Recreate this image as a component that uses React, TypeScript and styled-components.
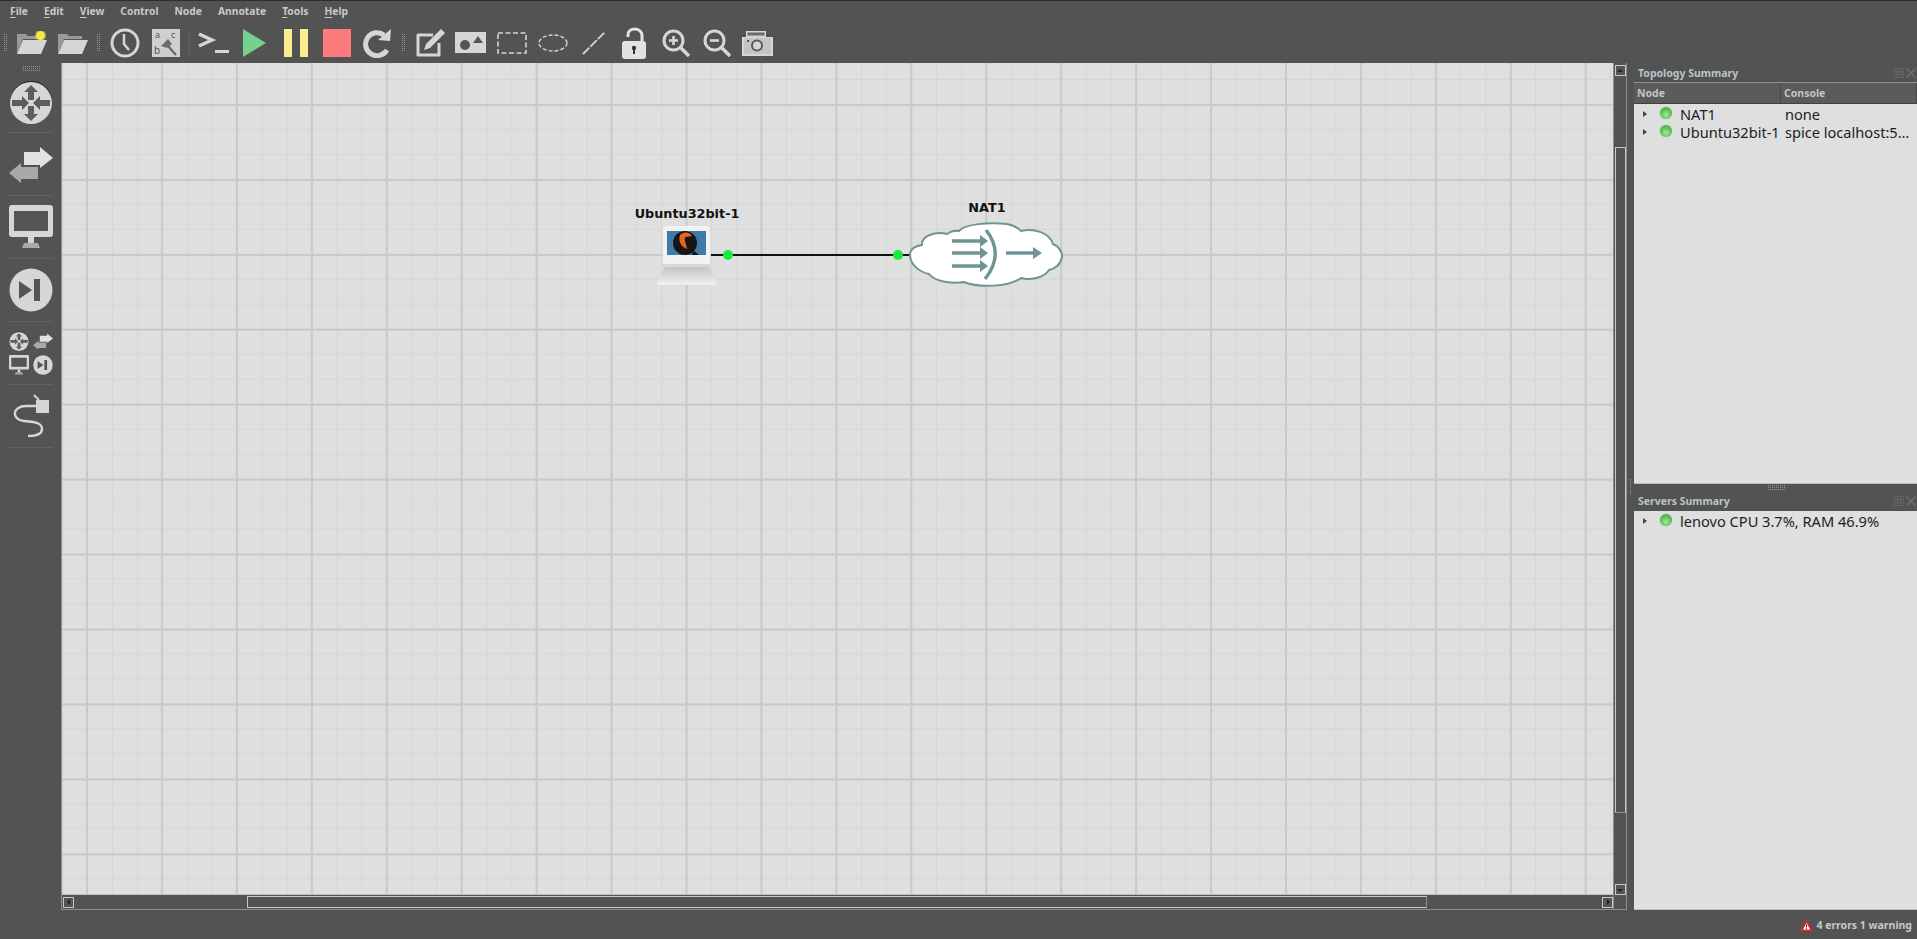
import * as React from "react";
import styled, {createGlobalStyle} from "styled-components";

const GlobalStyle = createGlobalStyle`
    html, body {
        margin: 0;
        padding: 0;
        height: 100%;
        overflow: hidden;
        background: #535353;
    }
    #root {
        height: 100%;
    }
`;

const Page = styled.div`
    width: 1917px;
    height: 939px;
    display: flex;
    flex-direction: column;
    background: #535353;
    font-family: "Noto Sans", "Open Sans", sans-serif;
    border-top: 1px solid #2e2e2e;
    box-sizing: border-box;
`;

const MenuBar = styled.div`
    height: 21px;
    display: flex;
    align-items: center;
    padding: 0 0 2px 10px;
    gap: 16px;
    box-sizing: border-box;
`;

const MenuItem = styled.span`
    font-size: 10.3px;
    font-weight: 700;
    color: #c6cacb;
    u {
        text-underline-offset: 2px;
    }
`;

const Toolbar = styled.div`
    height: 41px;
    display: flex;
    align-items: center;
`;

const Grip = styled.div`
    width: 5px;
    height: 18px;
    margin: 0 3px;
    flex: none;
    background: conic-gradient(#929292 25%, transparent 25%) 0 0 / 2px 2px;
`;

const ToolSep = styled.div`
    width: 1px;
    height: 28px;
    background: #5f5f5f;
    margin: 0 3px;
`;

const ToolButton = styled.div`
    width: 41px;
    height: 41px;
    display: flex;
    align-items: center;
    justify-content: center;
    flex: none;
`;

const Main = styled.div`
    height: 847px;
    display: flex;
`;

const LeftDock = styled.div`
    width: 61px;
    flex: none;
    display: flex;
    flex-direction: column;
    align-items: center;
`;

const HorizontalGrip = styled.div<{$top?: number}>`
    width: 18px;
    height: 5px;
    margin-top: ${p => p.$top ?? 0}px;
    flex: none;
    background: conic-gradient(#929292 25%, transparent 25%) 0 0 / 2px 2px;
`;

const DockButton = styled.div<{$h: number}>`
    width: 44px;
    height: ${p => p.$h}px;
    display: flex;
    align-items: center;
    justify-content: center;
    border-bottom: 1px solid #626262;
    box-sizing: border-box;
    flex: none;
`;

const MultiIcon = styled.div`
    display: grid;
    grid-template-columns: 20px 20px;
    gap: 4px;
    align-items: center;
    line-height: 0;
`;

const CanvasFrame = styled.div`
    width: 1566px;
    flex: none;
    display: grid;
    grid-template-columns: 1fr 13px;
    grid-template-rows: 1fr 14px;
    border: 1px solid #8f8f8f;
    border-top: 0;
    box-sizing: border-box;
`;

const Canvas = styled.div`
    position: relative;
    overflow: hidden;
    background-color: #dfdfdf;
    background-image:
        linear-gradient(to right, #c9c9c9 2px, transparent 2px),
        linear-gradient(to bottom, #c9c9c9 2px, transparent 2px),
        linear-gradient(to right, #d6d6d6 1px, transparent 1px),
        linear-gradient(to bottom, #d6d6d6 1px, transparent 1px);
    background-size: 74.95px 74.95px, 74.95px 74.95px, 24.98px 24.98px, 24.98px 24.98px;
    background-position: 24px 41px, 24px 41px, 0px 16px, 0px 16px;
    border-bottom: 1px solid #c0c0c0;
`;

const NodeLabel = styled.div<{$x: number; $y: number}>`
    position: absolute;
    left: ${p => p.$x}px;
    top: ${p => p.$y}px;
    transform: translate(-50%, -50%);
    font-family: "DejaVu Sans", sans-serif;
    font-size: 12.8px;
    font-weight: 700;
    color: #111;
    white-space: nowrap;
`;

const NodeArt = styled.div<{$x: number; $y: number}>`
    position: absolute;
    left: ${p => p.$x}px;
    top: ${p => p.$y}px;
    line-height: 0;
`;

const VScroll = styled.div`
    display: flex;
    flex-direction: column;
    align-items: center;
    background: #535353;
    border-left: 1px solid #8f8f8f;
    padding-top: 2px;
`;

const HScroll = styled.div`
    display: flex;
    align-items: center;
    background: #535353;
    padding-left: 1px;
`;

const ScrollButton = styled.div`
    width: 11px;
    height: 11px;
    flex: none;
    border: 1px solid #c8c8c8;
    background: #555;
    display: flex;
    align-items: center;
    justify-content: center;
    color: #222;
    box-sizing: border-box;
`;

const VThumb = styled.div`
    width: 11px;
    flex: none;
    height: 666px;
    margin-top: 71px;
    margin-bottom: auto;
    border: 1px solid #c8c8c8;
    border-bottom-color: #8f8f8f;
    box-sizing: border-box;
`;

const HThumb = styled.div`
    height: 12px;
    flex: none;
    width: 1180px;
    margin-left: 173px;
    margin-right: auto;
    border: 1px solid #c8c8c8;
    border-right-color: #8f8f8f;
    box-sizing: border-box;
`;

const Corner = styled.div`
    background: #535353;
    border-left: 1px solid #8f8f8f;
`;

const DockGap = styled.div`
    width: 7px;
    flex: none;
    display: flex;
    align-items: center;
    justify-content: center;
`;

const SideGrip = styled.div`
    width: 3px;
    height: 16px;
    background: conic-gradient(#929292 25%, transparent 25%) 0 0 / 2px 2px;
`;

const RightDock = styled.div`
    width: 283px;
    flex: none;
    display: flex;
    flex-direction: column;
`;

const DockTitle = styled.div<{$h: number}>`
    height: ${p => p.$h}px;
    display: flex;
    align-items: center;
    justify-content: space-between;
    padding: 0 1px 0 4px;
    font-size: 10.5px;
    font-weight: 700;
    color: #b9c5c9;
    flex: none;
`;

const TitleIcons = styled.div`
    display: flex;
    gap: 2px;
    color: #6e6e6e;
    line-height: 0;
`;

const TableHead = styled.div`
    height: 22px;
    display: flex;
    flex: none;
    background: #5b5b5b;
    border-top: 1px solid #8f8f8f;
    border-bottom: 1px solid #414141;
    box-sizing: border-box;
`;

const HeadCell = styled.div<{$w: number}>`
    width: ${p => p.$w}px;
    flex: none;
    display: flex;
    align-items: center;
    padding-left: 3px;
    box-sizing: border-box;
    font-size: 10.5px;
    font-weight: 700;
    color: #bfc6c8;
    border-right: 1px solid #484848;
`;

const PanelBody = styled.div<{$grow?: boolean}>`
    background: #dfdfdf;
    flex: ${p => (p.$grow ? 1 : "none")};
    height: 380px;
    padding-top: 1px;
    box-sizing: border-box;
    border-bottom: 1px solid #bdbdbd;
`;

const Row = styled.div`
    height: 18px;
    display: flex;
    align-items: center;
    font-size: 14.6px;
    color: #1d1d1d;
    white-space: nowrap;
`;

const Arrow = styled.span`
    width: 0;
    height: 0;
    margin-left: 9px;
    border-left: 4px solid #444;
    border-top: 3.5px solid transparent;
    border-bottom: 3.5px solid transparent;
    flex: none;
`;

const Led = styled.span`
    width: 12px;
    height: 12px;
    border-radius: 50%;
    margin-left: 13px;
    margin-right: 8px;
    flex: none;
    margin-top: -2px;
    background: radial-gradient(circle at 50% 65%, #a4ec9a 0%, #59c04f 55%, #4d9a47 100%);
    box-shadow: 0 0 1px #7a9a78;
`;

const NodeName = styled.span`
    width: 105px;
    flex: none;
`;

const Splitter = styled.div`
    height: 7px;
    display: flex;
    justify-content: center;
    align-items: center;
    flex: none;
`;

const StatusBar = styled.div`
    flex: 1;
    display: flex;
    align-items: center;
    justify-content: flex-end;
    gap: 3px;
    padding-right: 5px;
    font-size: 10.5px;
    font-weight: 700;
    color: #c6cacb;
`;

const L = "#d6d6d6";

const Folder = ({dot}: {dot?: boolean}) => (
    <svg width="32" height="24" viewBox="0 0 32 24">
        <path d="M1 23V3h9l2 2h13v3H7L1 23z" fill="#999" />
        <path d="M7 9h24l-6 14H1z" fill={L} />
        {dot && <circle cx="24.5" cy="4.5" r="6" fill="#f6e84a" opacity="0.3" />}
        {dot && <circle cx="24.5" cy="4.5" r="4.5" fill="#f6e84a" />}
    </svg>
);

const Clock = () => (
    <svg width="30" height="30" viewBox="0 0 30 30">
        <circle cx="15" cy="15" r="13" fill="none" stroke={L} strokeWidth="3" />
        <path d="M14 6v10l5 6" fill="none" stroke={L} strokeWidth="2.5" />
    </svg>
);

const AbcStyle = () => (
    <svg width="28" height="28" viewBox="0 0 28 28">
        <rect width="28" height="28" fill="#cfcfcf" />
        <text x="3" y="9" fontSize="9" fill="#555" fontFamily="Noto Sans">a</text>
        <text x="19" y="9" fontSize="9" fill="#555" fontFamily="Noto Sans">c</text>
        <text x="2" y="25" fontSize="10" fill="#555" fontFamily="Noto Sans">b</text>
        <path d="M9 17l7-7 4 5-5 4z" fill="#6d6d6d" />
        <path d="M16 17l8 9" stroke="#6d6d6d" strokeWidth="2.5" />
    </svg>
);

const Terminal = () => (
    <svg width="32" height="22" viewBox="0 0 32 22">
        <path d="M1 2l13 6-13 6" fill="none" stroke={L} strokeWidth="3.5" />
        <rect x="17" y="18" width="14" height="3" fill={L} />
    </svg>
);

const Play = () => (
    <svg width="23" height="28" viewBox="0 0 23 28">
        <path d="M0 0l23 14L0 28z" fill="#76d090" />
    </svg>
);

const Pause = () => (
    <svg width="24" height="28" viewBox="0 0 24 28">
        <rect width="8" height="28" fill="#f8ee8e" />
        <rect x="16" width="8" height="28" fill="#f8ee8e" />
    </svg>
);

const StopSquare = () => (
    <svg width="28" height="28" viewBox="0 0 28 28">
        <rect width="28" height="28" fill="#fb7a7e" />
    </svg>
);

const Reload = () => (
    <svg width="29" height="30" viewBox="0 0 29 30">
        <path d="M21 7a11.5 11.5 0 1 0 3 15" fill="none" stroke={L} strokeWidth="5" />
        <path d="M15 12L27 13l1-12z" fill={L} />
    </svg>
);

const Note = () => (
    <svg width="30" height="30" viewBox="0 0 30 30">
        <path d="M24 15v12H3V7h15" fill="none" stroke={L} strokeWidth="3" strokeLinejoin="round" />
        <path d="M26 1l4 4-15 15-6 2 2-6z" fill={L} />
    </svg>
);

const Picture = () => (
    <svg width="31" height="22" viewBox="0 0 31 22">
        <rect width="31" height="21" fill={L} />
        <circle cx="10" cy="13" r="5" fill="#555" />
        <path d="M18 11l5-7 5 7z" fill="#555" />
    </svg>
);

const DashRect = () => (
    <svg width="30" height="22" viewBox="0 0 30 22">
        <rect x="1" y="1" width="28" height="20" fill="none" stroke={L} strokeWidth="1.6" strokeDasharray="5 2.5" />
    </svg>
);

const DashEllipse = () => (
    <svg width="30" height="20" viewBox="0 0 30 20">
        <ellipse cx="15" cy="10" rx="14" ry="8" fill="none" stroke={L} strokeWidth="1.4" strokeDasharray="4 2" />
    </svg>
);

const DashLine = () => (
    <svg width="24" height="24" viewBox="0 0 24 24">
        <path d="M1 23L23 1" stroke={L} strokeWidth="1.8" strokeDasharray="9 1.5" />
    </svg>
);

const Lock = () => (
    <svg width="25" height="32" viewBox="0 0 25 32">
        <path d="M5 10V8c0-8 13-8 14 0v6" transform="translate(1 0)" fill="none" stroke="#e2e2e2" strokeWidth="3" />
        <rect x="0" y="14" width="24" height="18" rx="3" fill="#e2e2e2" />
        <circle cx="12" cy="21" r="2.2" fill="#333" />
        <rect x="11" y="22" width="2" height="5" fill="#333" />
    </svg>
);

const Zoom = ({plus}: {plus?: boolean}) => (
    <svg width="28" height="28" viewBox="0 0 28 28">
        <circle cx="11.5" cy="11.5" r="9.5" fill="none" stroke={L} strokeWidth="3" />
        <path d="M19 19l8 8" stroke={L} strokeWidth="3.5" />
        <path d="M7 11.5h9" stroke={L} strokeWidth="2.6" />
        {plus && <path d="M11.5 7v9" stroke={L} strokeWidth="2.6" />}
    </svg>
);

const Camera = () => (
    <svg width="31" height="26" viewBox="0 0 31 26">
        <path d="M0 7h4V1h20v6h7v19H0z" fill={L} />
        <rect x="5.5" y="2.5" width="17" height="3" fill="#6a6a6a" />
        <rect x="2" y="8" width="27" height="16" fill="#c4c4c4" />
        <circle cx="15" cy="15.5" r="6" fill="#5a5a5a" />
        <circle cx="15" cy="15.5" r="4" fill={L} />
        <rect x="5" y="10" width="2" height="2" fill="#555" />
    </svg>
);

const Router = ({size}: {size: number}) => (
    <svg width={size} height={size} viewBox="0 0 44 44">
        <path d="M2 22a20 20 0 0 1 40 0" fill="none" stroke="#1f1f1f" strokeWidth="2" />
        <circle cx="22" cy="23" r="21" fill={L} />
        <g fill="#5d5d5d">
            <path d="M22 5l7 7h-4v8h-6v-8h-4z" />
            <path d="M22 41l7-7h-4v-8h-6v8h-4z" />
            <path d="M20 23l-7-7v4H3v6h10v4z" />
            <path d="M24 23l7-7v4h10v6H31v4z" />
        </g>
    </svg>
);

const Switch = ({size}: {size: number}) => (
    <svg width={size} height={size * 37 / 44} viewBox="0 0 44 37">
        <path d="M29 21H12v-4L0 27l12 10v-4h17z" fill="#a9a9a9" />
        <path d="M15 6h16V1l13 11-13 10v-3H15z" fill="#e2e2e2" />
    </svg>
);

const Monitor = ({size}: {size: number}) => (
    <svg width={size} height={size} viewBox="0 0 44 44">
        <rect x="0" y="0" width="44" height="32" rx="3" fill={L} />
        <rect x="5" y="6" width="34" height="20" fill="#555" />
        <rect x="19" y="32" width="6" height="6" fill={L} />
        <path d="M13 43l2-5h14l2 5z" fill="#aaa" />
    </svg>
);

const EndDevice = ({size}: {size: number}) => (
    <svg width={size} height={size} viewBox="0 0 44 44">
        <circle cx="22" cy="22" r="21.5" fill={L} />
        <path d="M10 13l13 9-13 9z" fill="#555" />
        <rect x="25" y="11" width="6" height="22" fill="#555" />
    </svg>
);

const Cable = () => (
    <svg width="38" height="44" viewBox="0 0 38 44">
        <path d="M26 12H14C0 12-1 26 12 27c14 1 18 3 18 8 0 6-8 7-14 7" fill="none" stroke={L} strokeWidth="2.4" />
        <rect x="24" y="6" width="13" height="13" fill={L} />
        <path d="M27 6l-5-5" stroke={L} strokeWidth="2" />
    </svg>
);

const Laptop = () => (
    <svg width="60" height="60" viewBox="0 0 60 60">
        <defs>
            <linearGradient id="base" x1="0" y1="0" x2="0" y2="1">
                <stop offset="0" stopColor="#c4c4c4" />
                <stop offset="1" stopColor="#f2f2f2" />
            </linearGradient>
        </defs>
        <rect x="6" y="1" width="47" height="38" rx="2" fill="#f2f2f2" />
        <rect x="10" y="6" width="39" height="24" fill="#3f7ba6" />
        <circle cx="28" cy="18" r="12" fill="#161616" />
        <path d="M36 25l6 5h-7z" fill="#161616" />
        <path d="M23 10c4-4 10-3 12 1l-6 1c-3 1 0 6 1 12-6-2-9-8-7-14z" fill="#e8641c" />
        <path d="M6 39h47l1 3H5z" fill="#d8d8d8" />
        <path d="M8 42h44l8 14v2l-2 2H2l-2-2v-2z" fill="url(#base)" />
    </svg>
);

const Cloud = () => (
    <svg width="154" height="66" viewBox="0 0 154 66">
        <path
            d="M1 33C1 27 6 24 13 23C12 14 26 9 38 12C42 9 46 8 50 9C56 2 80 0 98 2C104 3 108 5 112 9C124 6 140 10 144 22C151 25 153 30 153 35C152 42 146 47 140 48C136 55 122 59 112 56C100 65 70 66 55 60C44 62 26 60 20 52C10 50 1 42 1 33Z"
            fill="#fff"
            stroke="#6f9494"
            strokeWidth="2"
        />
        <g stroke="#6f9494" fill="none">
            <path d="M43 19h30M43 31h30M43 44h30" strokeWidth="3.4" />
            <path d="M77 8Q96 32 76 57" strokeWidth="3.4" />
            <path d="M97 31h28" strokeWidth="3.4" />
        </g>
        <path d="M71 13l8 6-8 6zM71 25l8 6-8 6zM71 38l8 6-8 6zM124 25l9 6-9 6z" fill="#6f9494" />
    </svg>
);

const Link = () => (
    <svg width="220" height="12" viewBox="0 0 220 12">
        <path d="M4 6H204" stroke="#111" strokeWidth="2" />
        <circle cx="21" cy="6" r="5" fill="#14ee3c" />
        <circle cx="191" cy="6" r="5" fill="#14ee3c" />
    </svg>
);

const Warning = () => (
    <svg width="13" height="12" viewBox="0 0 13 12">
        <path d="M6.5 0.5L13 12H0z" fill="#e2232e" />
        <path d="M6.5 4L10 10.5H3z" fill="#fff" />
        <rect x="6" y="5.5" width="1" height="3" fill="#333" />
        <rect x="6" y="9" width="1" height="1" fill="#333" />
    </svg>
);

const FloatClose = () => (
    <TitleIcons>
        <svg width="10" height="10" viewBox="0 0 10 10">
            <rect x="0.5" y="0.5" width="9" height="9" fill="none" stroke="currentColor" strokeDasharray="2 1" />
            <rect x="3" y="3" width="4" height="4" fill="none" stroke="currentColor" />
        </svg>
        <svg width="10" height="10" viewBox="0 0 10 10">
            <path d="M0.5 0.5l9 9M9.5 0.5l-9 9" stroke="currentColor" strokeWidth="1.5" />
        </svg>
    </TitleIcons>
);

const Tri = ({dir}: {dir: "up" | "down" | "left" | "right"}) => {
    const paths = {
        up: "M4 2l3 3H1z",
        down: "M1 3h6L4 6z",
        left: "M5 1v6L2 4z",
        right: "M3 1v6l3-3z",
    };
    return (
        <svg width="8" height="8" viewBox="0 0 8 8">
            <path d={paths[dir]} fill="#222" />
        </svg>
    );
};

const menus: [string, string][] = [
    ["F", "ile"],
    ["E", "dit"],
    ["V", "iew"],
    ["", "Control"],
    ["", "Node"],
    ["", "Annotate"],
    ["T", "ools"],
    ["H", "elp"],
];

export default function App() {
    return (
        <Page>
            <GlobalStyle />
            <MenuBar>
                {menus.map(([key, rest]) => (
                    <MenuItem key={key + rest}>
                        {key && <u>{key}</u>}
                        {rest}
                    </MenuItem>
                ))}
            </MenuBar>
            <Toolbar>
                <Grip />
                <ToolButton><Folder dot /></ToolButton>
                <ToolButton><Folder /></ToolButton>
                <Grip />
                <ToolButton><Clock /></ToolButton>
                <ToolButton><AbcStyle /></ToolButton>
                <ToolSep />
                <ToolButton><Terminal /></ToolButton>
                <ToolButton><Play /></ToolButton>
                <ToolButton><Pause /></ToolButton>
                <ToolButton><StopSquare /></ToolButton>
                <ToolButton><Reload /></ToolButton>
                <Grip />
                <ToolButton><Note /></ToolButton>
                <ToolButton><Picture /></ToolButton>
                <ToolButton><DashRect /></ToolButton>
                <ToolButton><DashEllipse /></ToolButton>
                <ToolButton><DashLine /></ToolButton>
                <ToolButton><Lock /></ToolButton>
                <ToolButton><Zoom plus /></ToolButton>
                <ToolButton><Zoom /></ToolButton>
                <ToolButton><Camera /></ToolButton>
            </Toolbar>
            <Main>
                <LeftDock>
                    <HorizontalGrip $top={3} />
                    <DockButton $h={62}><Router size={44} /></DockButton>
                    <DockButton $h={63}><Switch size={44} /></DockButton>
                    <DockButton $h={63}><Monitor size={44} /></DockButton>
                    <DockButton $h={63}><EndDevice size={44} /></DockButton>
                    <DockButton $h={63}>
                        <MultiIcon>
                            <Router size={20} />
                            <Switch size={20} />
                            <Monitor size={20} />
                            <EndDevice size={20} />
                        </MultiIcon>
                    </DockButton>
                    <DockButton $h={63}><Cable /></DockButton>
                </LeftDock>
                <CanvasFrame>
                    <Canvas>
                        <NodeArt $x={645} $y={186}><Link /></NodeArt>
                        <NodeLabel $x={625} $y={150}>Ubuntu32bit-1</NodeLabel>
                        <NodeArt $x={595} $y={162}><Laptop /></NodeArt>
                        <NodeLabel $x={925} $y={144}>NAT1</NodeLabel>
                        <NodeArt $x={847} $y={159}><Cloud /></NodeArt>
                    </Canvas>
                    <VScroll>
                        <ScrollButton><Tri dir="up" /></ScrollButton>
                        <VThumb />
                        <ScrollButton><Tri dir="down" /></ScrollButton>
                    </VScroll>
                    <HScroll>
                        <ScrollButton><Tri dir="left" /></ScrollButton>
                        <HThumb />
                        <ScrollButton><Tri dir="right" /></ScrollButton>
                    </HScroll>
                    <Corner />
                </CanvasFrame>
                <DockGap><SideGrip /></DockGap>
                <RightDock>
                    <DockTitle $h={19}>
                        Topology Summary
                        <FloatClose />
                    </DockTitle>
                    <TableHead>
                        <HeadCell $w={147}>Node</HeadCell>
                        <HeadCell $w={136}>Console</HeadCell>
                    </TableHead>
                    <PanelBody>
                        <Row>
                            <Arrow /><Led />
                            <NodeName>NAT1</NodeName>
                            none
                        </Row>
                        <Row>
                            <Arrow /><Led />
                            <NodeName>Ubuntu32bit-1</NodeName>
                            spice localhost:5…
                        </Row>
                    </PanelBody>
                    <Splitter><HorizontalGrip /></Splitter>
                    <DockTitle $h={20}>
                        Servers Summary
                        <FloatClose />
                    </DockTitle>
                    <PanelBody $grow>
                        <Row>
                            <Arrow /><Led />
                            lenovo CPU 3.7%, RAM 46.9%
                        </Row>
                    </PanelBody>
                </RightDock>
            </Main>
            <StatusBar>
                <Warning />
                4 errors 1 warning
            </StatusBar>
        </Page>
    );
}
